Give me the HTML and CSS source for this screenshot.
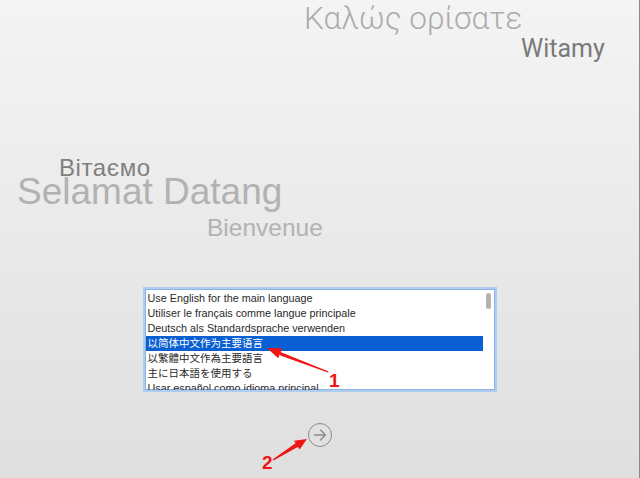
FILE: index.html
```html
<!DOCTYPE html>
<html>
<head>
<meta charset="utf-8">
<link rel="stylesheet" href="styles.css">
</head>
<body>
<div class="window">
  <div class="hero">
    <span class="greet g-greek">Καλώς ορίσατε</span>
    <span class="greet g-pl">Witamy</span>
    <span class="greet g-ua">Вітаємо</span>
    <span class="greet g-ms">Selamat Datang</span>
    <span class="greet g-fr">Bienvenue</span>
  </div>
  <div class="list">
    <ul class="rows">
      <li>Use English for the main language</li>
      <li>Utiliser le français comme langue principale</li>
      <li>Deutsch als Standardsprache verwenden</li>
      <li class="sel sc">以简体中文作为主要语言</li>
      <li class="tc">以繁體中文作為主要語言</li>
      <li class="jp">主に日本語を使用する</li>
      <li>Usar español como idioma principal</li>
    </ul>
    <div class="scroll"><div class="thumb"></div></div>
  </div>
  <div class="next">
    <div class="next-btn">
      <svg width="16" height="16" viewBox="0 0 16 16"><path d="M2.5 8 H13.5 M8.5 3 L13.5 8 L8.5 13" fill="none" stroke="#8a8a8a" stroke-width="1.4" stroke-linecap="round" stroke-linejoin="round"/></svg>
    </div>
  </div>
  <svg class="annot" width="640" height="478" viewBox="0 0 640 478">
    <polygon points="328,371.3 328.6,372.7 280.3,355.4 279.2,351.6" fill="#f01515"/>
    <polygon points="267,348 282.2,348.3 278.2,358.2" fill="#f01515"/>
    <text x="329" y="387" class="num">1</text>
    <polygon points="272.6,459.4 273.4,460.6 298.6,446.6 296.2,442.8" fill="#f01515"/>
    <polygon points="307,439 299.6,449.6 294,440.8" fill="#f01515"/>
    <text x="262" y="469" class="num">2</text>
  </svg>
</div>
</body>
</html>
```
FILE: styles.css
```css
html, body {
  margin: 0;
  padding: 0;
}
body {
  width: 640px;
  height: 478px;
  overflow: hidden;
  font-family: "Liberation Sans", Arial, sans-serif;
}
.window {
  position: relative;
  width: 640px;
  height: 478px;
  box-sizing: border-box;
  background: linear-gradient(#f4f4f4, #dfdfdf);
  border-right: 1px solid #8a8a8a;
  display: flex;
  flex-direction: column;
  align-items: center;
}
.hero {
  position: relative;
  width: 100%;
  height: 287px;
  flex: none;
}
.greet {
  position: absolute;
  line-height: 1;
  white-space: nowrap;
}
.g-greek {
  font-family: Roboto, sans-serif;
  font-weight: 300;
  font-size: 31.5px;
  color: #acacac;
  left: 304px;
  top: 3px;
}
.g-pl {
  font-family: Roboto, sans-serif;
  font-size: 25px;
  color: #7a7a7a;
  left: 521px;
  top: 36px;
}
.g-ua {
  font-size: 24px;
  letter-spacing: 0.6px;
  color: #808080;
  left: 59px;
  top: 156px;
}
.g-ms {
  font-size: 37px;
  color: #b2b2b2;
  left: 17px;
  top: 173px;
}
.g-fr {
  font-size: 24.5px;
  color: #b2b2b2;
  left: 207px;
  top: 216px;
}
.list {
  width: 354px;
  height: 105px;
  box-sizing: border-box;
  border: 2px solid #aecbf0;
  box-shadow: inset 0 0 0 1px #8db3e6;
  background: #fff;
  display: flex;
  overflow: hidden;
  flex: none;
}
.rows {
  list-style: none;
  margin: 0;
  padding: 2px 0 0 1px;
  flex: 1;
  font-size: 10.8px;
  color: #2a2a2a;
}
.rows li {
  height: 15px;
  line-height: 15px;
  padding-left: 2px;
  white-space: nowrap;
}
.rows li.sel {
  background: #0a60d2;
  color: #fff;
}
.sc, .tc, .jp { font-size: 10.5px; }
.sc { font-family: "Liberation Sans", "Noto Sans CJK SC", sans-serif; }
.tc { font-family: "Liberation Sans", "Noto Sans CJK TC", sans-serif; }
.jp { font-family: "Liberation Sans", "Noto Sans CJK JP", sans-serif; }
.scroll {
  width: 12px;
  flex: none;
  padding-top: 4px;
  box-sizing: border-box;
}
.thumb {
  width: 5px;
  height: 16px;
  margin-left: 3px;
  border-radius: 3px;
  background: #b3b3b3;
}
.next {
  margin-top: 31px;
  padding-left: 1px;
}
.next-btn {
  width: 24px;
  height: 24px;
  box-sizing: border-box;
  border: 1.5px solid #8c8c8c;
  border-radius: 50%;
  display: flex;
  align-items: center;
  justify-content: center;
}
.annot {
  position: absolute;
  left: 0;
  top: 0;
}
.num {
  font-family: "Liberation Sans", Arial, sans-serif;
  font-weight: bold;
  font-size: 19px;
  fill: #f01515;
}
```
